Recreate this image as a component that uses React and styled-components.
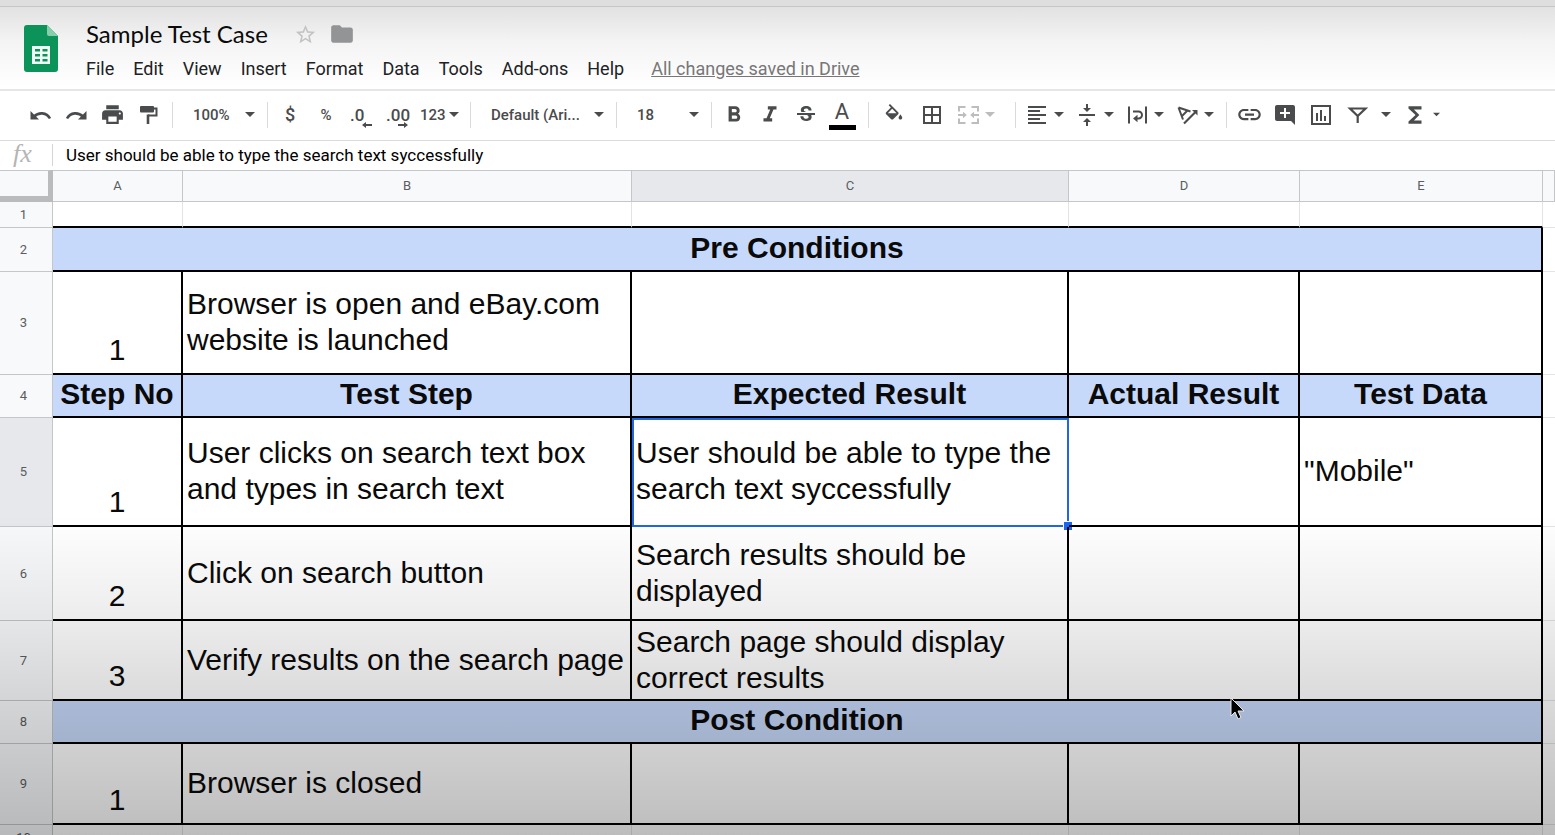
import React from "react";
import styled, { createGlobalStyle, css } from "styled-components";
import {
  MdPrint,
  MdFormatBold,
  MdFormatItalic,
  MdStrikethroughS,
  MdBorderAll,
  MdFormatAlignLeft,
  MdVerticalAlignCenter,
  MdLink,
  MdAddComment,
  MdFunctions,
  MdFolder,
  MdStarBorder,
} from "react-icons/md";

const ui = `Roboto, "Liberation Sans", sans-serif`;
const ink = "#4a4b4d";

const GlobalStyle = createGlobalStyle`
  *, *::before, *::after { box-sizing: border-box; }
  body { margin: 0; background: #fff; font-family: ${ui}; overflow: hidden; }
  button, select, input { font-family: inherit; margin: 0; border: 0; background: none; outline: none; }
`;

const Page = styled.div`
  position: relative;
  display: flex;
  flex-direction: column;
  height: 100vh;
  overflow: hidden;
`;

const WindowEdge = styled.div`
  flex: none;
  height: 7px;
  background: #dedede;
  border-bottom: 1px solid #c6c6c6;
`;

const Header = styled.header`
  flex: none;
  display: flex;
  gap: 28px;
  height: 84px;
  padding: 12px 24px 0;
  background: linear-gradient(#e2e2e2, #f4f4f4 35px, #fff 80px);
  border-bottom: 2px solid #e6e6e6;
`;

const Logo = styled.svg`
  flex: none;
  width: 34px;
  height: 47px;
  margin-top: 6px;
`;

const HeaderText = styled.div`
  display: flex;
  flex-direction: column;
  gap: 8px;
`;

const TitleRow = styled.div`
  display: flex;
  align-items: center;
  height: 30px;
`;

const Title = styled.h1`
  margin: 0 26px 0 0;
  font: 400 24px/30px Lato, ${ui};
  color: #0b0b0b;
  white-space: nowrap;
`;

const PlainIcon = styled.button`
  display: flex;
  padding: 0;
  margin-right: 12px;
  color: ${(p) => p.$color};
`;

const MenuBar = styled.nav`
  display: flex;
  align-items: center;
  gap: 19px;
  height: 24px;
`;

const MenuItem = styled.button`
  padding: 0;
  font-size: 18px;
  line-height: 24px;
  color: #202124;
  white-space: nowrap;
`;

const SavedLink = styled.a`
  margin-left: 8px;
  font-size: 18px;
  line-height: 24px;
  color: #777;
  white-space: nowrap;
`;

const Toolbar = styled.div`
  flex: none;
  display: flex;
  align-items: center;
  height: 50px;
  padding: 0 0 2px 22px;
  border-bottom: 1px solid #dcdcdc;
  background: #fff;
`;

const Group = styled.div`
  display: flex;
  align-items: center;
  padding: 0 ${(p) => p.$after || 0}px 0 ${(p) => p.$before || 0}px;
`;

const Divider = styled.span`
  flex: none;
  width: 1px;
  height: 26px;
  margin: 0 4px 0 6px;
  background: #dadada;
`;

const Tool = styled.button`
  position: relative;
  flex: none;
  display: flex;
  align-items: center;
  justify-content: center;
  width: ${(p) => p.$width || 36}px;
  height: 36px;
  padding: 0;
  font-size: ${(p) => p.$size || 18}px;
  font-weight: 500;
  color: ${ink};
`;

const DecimalTool = styled(Tool)`
  justify-content: flex-start;
  padding-left: 6px;
  font-size: 17px;
`;

const MenuTool = styled(Tool)`
  justify-content: flex-start;
  gap: 5px;
  width: ${(p) => p.$width || 50}px;
  padding-left: 5px;
  color: ${(p) => (p.disabled ? "#bdbdbd" : ink)};
`;

const FormatTool = styled(MenuTool)`
  gap: 3px;
  padding-left: 4px;
  font-size: 15px;
`;

const Picker = styled.label`
  position: relative;
  flex: none;
  display: flex;
  align-items: center;
  width: ${(p) => p.$width}px;
  height: 36px;
  color: ${ink};

  select {
    appearance: none;
    width: 100%;
    padding: 0 0 0 16px;
    font-size: 15px;
    font-weight: 500;
    line-height: 24px;
    color: ${ink};
  }

  svg {
    position: absolute;
    right: 6px;
  }
`;

const DecimalArrow = styled.svg`
  position: absolute;
  right: 8px;
  bottom: 5px;
`;

const TextColor = styled.span`
  display: flex;
  flex-direction: column;
  align-items: center;
  width: 27px;
  border-bottom: 5px solid #000;
  font-size: 22px;
  font-weight: 400;
  line-height: 26px;
`;

const FormulaBar = styled.label`
  flex: none;
  display: flex;
  align-items: center;
  height: 29px;
  padding-bottom: 2px;
  background: #fff;
`;

const Fx = styled.span`
  width: 53px;
  height: 22px;
  padding-left: 13px;
  border-right: 1px solid #d5d5d5;
  font: italic 26px/20px "Liberation Serif", serif;
  color: #b4b4b4;
`;

const FormulaInput = styled.input`
  flex: 1;
  padding: 0 13px;
  font-size: 17px;
  line-height: 24px;
  color: #000;
`;

const Sheet = styled.table`
  flex: none;
  width: 100%;
  table-layout: fixed;
  border-collapse: separate;
  border-spacing: 0;
`;

const Column = styled.col`
  width: ${(p) => p.$width};
`;

const headCell = css`
  padding: 0;
  background: ${(p) => (p.$active ? "#e7e8ec" : "#f8f9fb")};
  border-right: 1px solid #c4c6c8;
  border-bottom: 1px solid #c4c6c8;
  font-size: 13px;
  font-weight: 400;
  line-height: 16px;
  color: #5a5d60;
`;

const ColumnHead = styled.th`
  ${headCell}
  height: 32px;
  border-top: 1px solid #c4c6c8;
`;

const Corner = styled.td`
  ${headCell}
  height: 32px;
  border-top: 1px solid #c4c6c8;
  border-right: 5px solid #b9bbbd;
  border-bottom: 6px solid #b9bbbd;
`;

const RowHead = styled.th`
  ${headCell}
  padding-right: 5px;
`;

const Row = styled.tr`
  height: ${(p) => p.$height}px;
`;

const Blank = styled.td`
  padding: 0;
  border-right: ${(p) => (p.$edge ? 0 : 1)}px solid #e2e3e3;
  border-bottom: ${(p) => (p.$ruled ? "2px solid #000" : "1px solid #e2e3e3")};
`;

const Cell = styled.td`
  position: relative;
  padding: 0 4px 1px;
  border-right: 2px solid #000;
  border-bottom: 2px solid #000;
  font: 400 30px/36px "Liberation Sans", Arial, sans-serif;
  color: #0a0a0a;
  vertical-align: middle;
`;

const StepCell = styled(Cell)`
  padding-bottom: 5px;
  text-align: center;
  vertical-align: bottom;
`;

const Band = styled(Cell)`
  padding: 0 0 3px;
  background: #c7d9fa;
  font-weight: 700;
  text-align: center;
`;

const Selection = styled.span`
  position: absolute;
  inset: 0 -2px -2px 0;
  border: 2px solid #2266e3;
  pointer-events: none;

  &::after {
    content: "";
    position: absolute;
    right: -6px;
    bottom: -6px;
    width: 10px;
    height: 10px;
    border: 1px solid #fff;
    background: #1a67f0;
  }
`;

const Shade = styled.div`
  position: absolute;
  inset: auto 0 0 0;
  height: 320px;
  pointer-events: none;
  background: linear-gradient(
    rgba(0, 0, 0, 0),
    rgba(0, 0, 0, 0.075) 105px,
    rgba(0, 0, 0, 0.145) 185px,
    rgba(0, 0, 0, 0.19) 235px,
    rgba(0, 0, 0, 0.26)
  );
`;

const Pointer = styled.svg`
  position: absolute;
  left: 1229px;
  top: 697px;
  pointer-events: none;
`;

const Caret = ({ width = 10 }) => (
  <svg width={width} height="5" viewBox="0 0 10 5" fill="currentColor" aria-hidden="true">
    <path d="M0 0h10L5 5z" />
  </svg>
);

const Glyph = ({ size = 24, children }) => (
  <svg
    width={size}
    height={size}
    viewBox="0 0 24 24"
    fill="none"
    stroke="currentColor"
    strokeWidth="2"
    aria-hidden="true"
  >
    {children}
  </svg>
);

const UndoIcon = () => (
  <Glyph>
    <path d="M6 13.500C10.500 9 18.500 9 22 15.500" strokeWidth="2.600" />
    <path stroke="none" fill="currentColor" d="M2.500 8v8.500H11z" />
  </Glyph>
);

const RedoIcon = () => (
  <Glyph>
    <path d="M19 13.500C14.500 9 6.500 9 3 15.500" strokeWidth="2.600" />
    <path stroke="none" fill="currentColor" d="M22.500 8v8.500H14z" />
  </Glyph>
);

const PaintIcon = () => (
  <Glyph>
    <path stroke="none" fill="currentColor" d="M5 3h12a1 1 0 0 1 1 1v4.500a1 1 0 0 1-1 1H5a1 1 0 0 1-1-1V4a1 1 0 0 1 1-1z" />
    <path d="M17 5.500h3.500V12.500H12" />
    <path d="M12 11.500V21" strokeWidth="2.600" />
  </Glyph>
);

const FillIcon = () => (
  <Glyph size={22}>
    <path
      stroke="none"
      fill="currentColor"
      d="M16.56 8.94L7.62 0 6.21 1.41l2.38 2.38-5.15 5.15c-.59.59-.59 1.54 0 2.12l5.5 5.5c.29.29.68.44 1.06.44s.77-.15 1.06-.44l5.5-5.5c.59-.58.59-1.53 0-2.12zM5.21 10L10 5.21 14.79 10H5.21zM19 11.5s-2 2.17-2 3.5c0 1.1.9 2 2 2s2-.9 2-2c0-1.33-2-3.5-2-3.5z"
    />
  </Glyph>
);

const MergeIcon = () => (
  <Glyph>
    <path d="M3 8.500V4h6.500M15.500 4H22v4.500M3 15.500V20h6.500M15.500 20H22v-4.500M2 12h5M23 12h-5" />
    <path stroke="none" fill="currentColor" d="M7 8.800L10.800 12 7 15.200zM18 8.800L14.200 12l3.800 3.200z" />
  </Glyph>
);

const WrapIcon = () => (
  <Glyph>
    <path d="M4 3.500v17M21 3.500v17M8 8.500h5.500a3.500 3.500 0 0 1 0 7h-2" />
    <path stroke="none" fill="currentColor" d="M12.500 11.800v7.400L8 15.500z" />
  </Glyph>
);

const RotateIcon = () => (
  <Glyph>
    <path d="M3.500 4.500L15.500 8.500M3.500 4.500L8 16.500M7 13l5.500-5.500" />
    <path d="M9 20.500L20.500 9" strokeWidth="2.200" />
    <path stroke="none" fill="currentColor" d="M17 7h5.500v5.500z" />
  </Glyph>
);

const ChartIcon = () => (
  <Glyph>
    <path d="M3 3h18v18H3zM8 18v-8M12 18V7M16 18v-5" />
  </Glyph>
);

const FilterIcon = () => (
  <Glyph>
    <path d="M5 5.500h15.500L12.700 13zM12.700 12v8" strokeWidth="2.200" />
  </Glyph>
);

const menus = ["File", "Edit", "View", "Insert", "Format", "Data", "Tools", "Add-ons", "Help"];

const columns = ["A", "B", "C", "D", "E"];

const rows = [
  { height: 44, band: "Pre Conditions" },
  { height: 103, cells: ["1", "Browser is open and eBay.com website is launched", "", "", ""] },
  { height: 43, heads: ["Step No", "Test Step", "Expected Result", "Actual Result", "Test Data"] },
  {
    height: 109,
    selected: 2,
    cells: [
      "1",
      "User clicks on search text box and types in search text",
      "User should be able to type the search text syccessfully",
      "",
      '"Mobile"',
    ],
  },
  { height: 94, cells: ["2", "Click on search button", "Search results should be displayed", "", ""] },
  {
    height: 80,
    cells: ["3", "Verify results on the search page", "Search page should display correct results", "", ""],
  },
  { height: 43, band: "Post Condition" },
  { height: 81, cells: ["1", "Browser is closed", "", "", ""] },
];

function SheetRow({ row, number }) {
  return (
    <Row $height={row.height}>
      <RowHead scope="row" $active={row.selected !== undefined}>
        {number}
      </RowHead>
      {row.band && <Band colSpan={5}>{row.band}</Band>}
      {row.heads && row.heads.map((text) => <Band key={text}>{text}</Band>)}
      {row.cells &&
        row.cells.map((text, i) => {
          const Kind = i === 0 ? StepCell : Cell;
          return (
            <Kind key={columns[i]}>
              {text}
              {row.selected === i && <Selection />}
            </Kind>
          );
        })}
      <Blank $edge />
    </Row>
  );
}

export default function App() {
  return (
    <Page>
      <GlobalStyle />
      <WindowEdge />
      <Header>
        <Logo viewBox="0 0 34 47" aria-hidden="true">
          <path d="M3 0h20l11 11v33a3 3 0 0 1-3 3H3a3 3 0 0 1-3-3V3a3 3 0 0 1 3-3z" fill="#0b935a" />
          <path d="M23 0l11 11H25a2 2 0 0 1-2-2z" fill="#87ceac" />
          <path
            fill="#f1fbf5"
            fillRule="evenodd"
            d="M8 21h18v18H8zM11 24v2.500h5V24zM18.500 24v2.500h5V24zM11 29v2.500h5V29zM18.500 29v2.500h5V29zM11 34v2.500h5V34zM18.500 34v2.500h5V34z"
          />
        </Logo>
        <HeaderText>
          <TitleRow>
            <Title>Sample Test Case</Title>
            <PlainIcon $color="#c2c2c2" aria-label="Star">
              <MdStarBorder size={23} />
            </PlainIcon>
            <PlainIcon $color="#929496" aria-label="Move to folder">
              <MdFolder size={26} />
            </PlainIcon>
          </TitleRow>
          <MenuBar>
            {menus.map((name) => (
              <MenuItem key={name}>{name}</MenuItem>
            ))}
            <SavedLink href="#drive">All changes saved in Drive</SavedLink>
          </MenuBar>
        </HeaderText>
      </Header>

      <Toolbar role="toolbar">
        <Group>
          <Tool aria-label="Undo"><UndoIcon /></Tool>
          <Tool aria-label="Redo"><RedoIcon /></Tool>
          <Tool aria-label="Print"><MdPrint size={25} /></Tool>
          <Tool aria-label="Paint format"><PaintIcon /></Tool>
        </Group>
        <Divider />
        <Picker $width={84}>
          <select aria-label="Zoom"><option>100%</option></select>
          <Caret />
        </Picker>
        <Divider />
        <Group>
          <Tool aria-label="Currency">$</Tool>
          <Tool aria-label="Percent" $size={15}>%</Tool>
          <DecimalTool aria-label="Decrease decimal places">
            .0
            <DecimalArrow width="10" height="6" viewBox="0 0 10 6">
              <path d="M0 3l4-3v2h6v2H4v2z" fill={ink} />
            </DecimalArrow>
          </DecimalTool>
          <DecimalTool aria-label="Increase decimal places">
            .00
            <DecimalArrow width="10" height="6" viewBox="0 0 10 6">
              <path d="M10 3L6 0v2H0v2h6v2z" fill={ink} />
            </DecimalArrow>
          </DecimalTool>
          <FormatTool $width={48}>
            123
            <Caret />
          </FormatTool>
        </Group>
        <Divider />
        <Picker $width={135}>
          <select aria-label="Font"><option>Default (Ari...</option></select>
          <Caret />
        </Picker>
        <Divider />
        <Picker $width={84}>
          <select aria-label="Font size"><option>18</option></select>
          <Caret />
        </Picker>
        <Divider />
        <Group $after={2}>
          <Tool aria-label="Bold"><MdFormatBold size={26} /></Tool>
          <Tool aria-label="Italic"><MdFormatItalic size={26} /></Tool>
          <Tool aria-label="Strikethrough"><MdStrikethroughS size={24} /></Tool>
          <Tool aria-label="Text color"><TextColor>A</TextColor></Tool>
        </Group>
        <Divider />
        <Group $before={2}>
          <Tool aria-label="Fill color" $width={38}><FillIcon /></Tool>
          <Tool aria-label="Borders" $width={38}><MdBorderAll size={24} /></Tool>
          <MenuTool aria-label="Merge cells" $width={58} disabled>
            <MergeIcon />
            <Caret />
          </MenuTool>
        </Group>
        <Divider />
        <Group>
          <MenuTool aria-label="Horizontal align"><MdFormatAlignLeft size={24} /><Caret /></MenuTool>
          <MenuTool aria-label="Vertical align"><MdVerticalAlignCenter size={24} /><Caret /></MenuTool>
          <MenuTool aria-label="Text wrapping"><WrapIcon /><Caret /></MenuTool>
          <MenuTool aria-label="Text rotation"><RotateIcon /><Caret /></MenuTool>
        </Group>
        <Divider />
        <Group>
          <Tool aria-label="Insert link"><MdLink size={27} /></Tool>
          <Tool aria-label="Insert comment"><MdAddComment size={24} /></Tool>
          <Tool aria-label="Insert chart"><ChartIcon /></Tool>
          <Tool aria-label="Filter"><FilterIcon /></Tool>
          <Tool aria-label="Filter views" $width={22}><Caret /></Tool>
          <MenuTool aria-label="Functions"><MdFunctions size={26} /><Caret width={7} /></MenuTool>
        </Group>
      </Toolbar>

      <FormulaBar>
        <Fx>fx</Fx>
        <FormulaInput defaultValue="User should be able to type the search text syccessfully" />
      </FormulaBar>

      <Sheet>
        <colgroup>
          <Column $width="53px" />
          <Column $width="130px" />
          <Column $width="449px" />
          <Column $width="437px" />
          <Column $width="231px" />
          <Column $width="243px" />
          <Column $width="auto" />
        </colgroup>
        <thead>
          <tr>
            <Corner />
            {columns.map((name) => (
              <ColumnHead key={name} scope="col" $active={name === "C"}>
                {name}
              </ColumnHead>
            ))}
            <ColumnHead as="td" />
          </tr>
        </thead>
        <tbody>
          <Row $height={26}>
            <RowHead scope="row">1</RowHead>
            {columns.map((name) => (
              <Blank key={name} $ruled />
            ))}
            <Blank $edge />
          </Row>
          {rows.map((row, i) => (
            <SheetRow key={i} row={row} number={i + 2} />
          ))}
          <Row $height={26}>
            <RowHead scope="row">10</RowHead>
            {columns.map((name) => (
              <Blank key={name} />
            ))}
            <Blank $edge />
          </Row>
        </tbody>
      </Sheet>

      <Shade />
      <Pointer width="16" height="24" viewBox="0 0 16 24" aria-hidden="true">
        <path d="M2 1v18l4-4 3 7 3-1.500-3-6.500h6z" fill="#000" stroke="#e8e8e8" strokeWidth="1" />
      </Pointer>
    </Page>
  );
}
